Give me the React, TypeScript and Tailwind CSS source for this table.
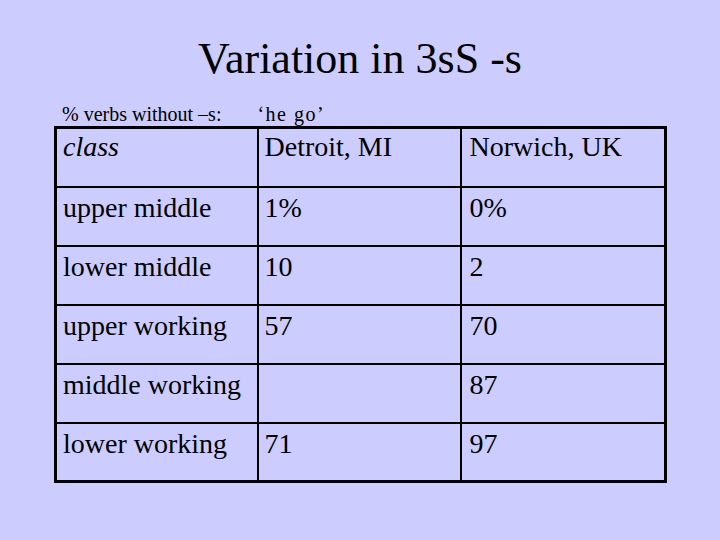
const rows = [
  { label: "upper middle", detroit: "1%", norwich: "0%" },
  { label: "lower middle", detroit: "10", norwich: "2" },
  { label: "upper working", detroit: "57", norwich: "70" },
  { label: "middle working", detroit: "", norwich: "87" },
  { label: "lower working", detroit: "71", norwich: "97" },
];

const cell = "border-2 border-black font-['Liberation_Serif',serif] font-normal";

export default function App() {
  return (
    <div className="w-[720px] h-[540px] bg-[#ccccff] font-['Liberation_Serif',serif] text-black overflow-hidden">
      {/* Title */}
      <h1 className="pt-[34px] text-center text-[44px] leading-[50px]">Variation in 3sS -s</h1>

      <div className="flex pl-[62px] pt-[19px] text-[20px] leading-[23px]">
        <span>% verbs without –s:</span>
        <span className="ml-[36px] tracking-[1.5px]">‘he go’</span>
      </div>

      {/* Table */}
      <table className="ml-[54px] border-collapse border-[3px] border-black text-[28px] leading-[32px]">
        <tbody>
          <tr className="h-[59px] align-top">
            <td className={`w-[202px] px-[6px] pt-[2px] italic ${cell}`}>class</td>
            <td className={`w-[203px] px-[6px] pt-[2px] ${cell}`}>Detroit, MI</td>
            <td className={`w-[205px] px-[8px] pt-[2px] ${cell}`}>Norwich, UK</td>
          </tr>
          {rows.map((r) => (
            <tr key={r.label} className="h-[59px] align-top">
              <td className={`px-[6px] pt-[4px] ${cell}`}>{r.label}</td>
              <td className={`px-[6px] pt-[4px] ${cell}`}>{r.detroit}</td>
              <td className={`px-[8px] pt-[4px] ${cell}`}>{r.norwich}</td>
            </tr>
          ))}
        </tbody>
      </table>
    </div>
  );
}
